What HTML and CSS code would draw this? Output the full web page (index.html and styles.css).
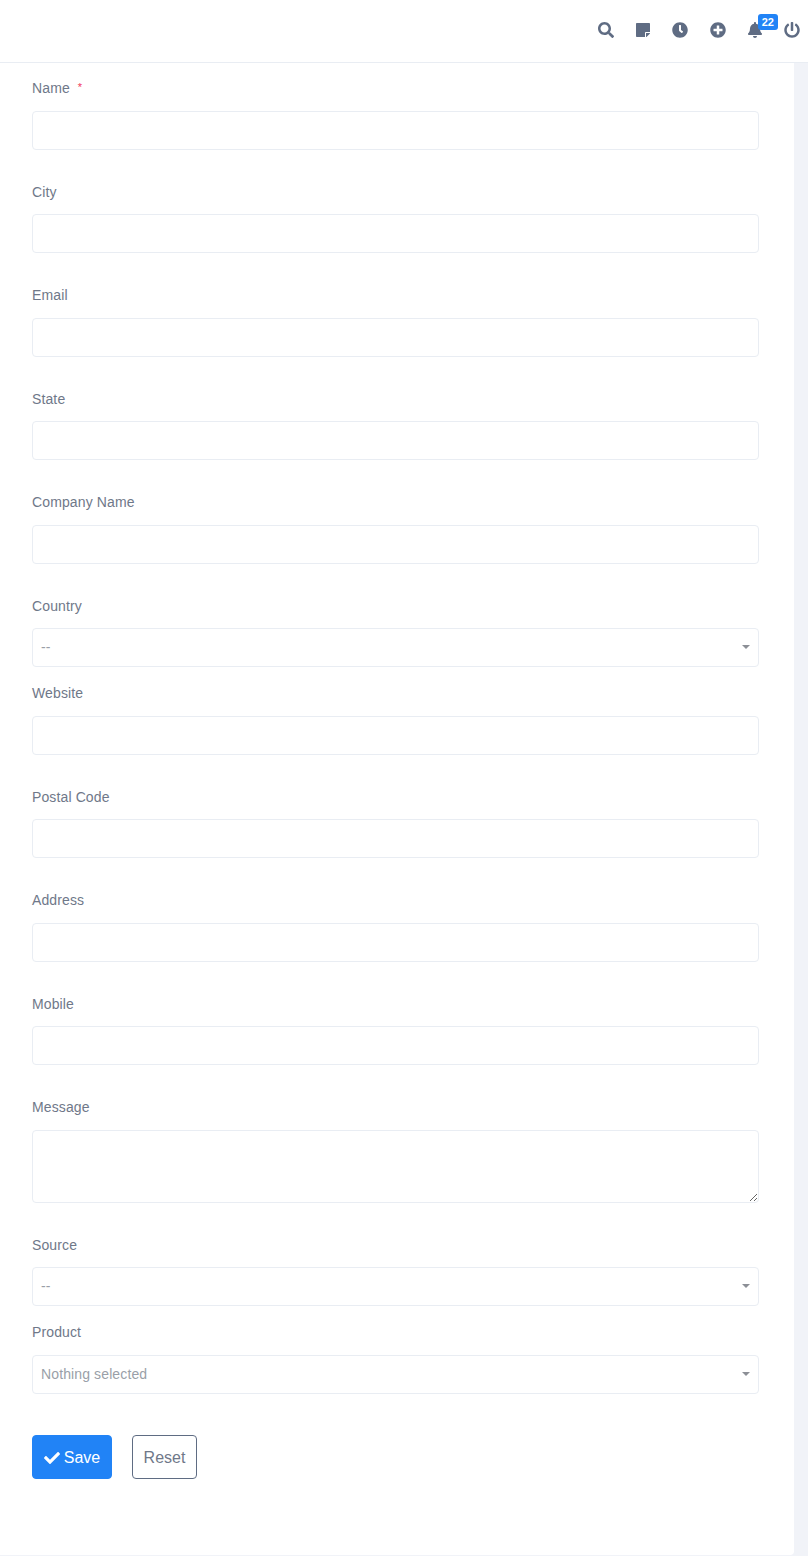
FILE: index.html
```html
<!DOCTYPE html>
<html lang="en">
<head>
<meta charset="utf-8">
<title>New Lead</title>
<link rel="stylesheet" href="styles.css">
</head>
<body>
<header class="topbar">
  <nav class="tools">
    <a class="tool"><svg class="icon" viewBox="0 0 512 512"><path d="M505 442.7L405.3 343c-4.5-4.5-10.6-7-17-7H372c27.6-35.3 44-79.7 44-128C416 93.1 322.9 0 208 0S0 93.1 0 208s93.1 208 208 208c48.3 0 92.7-16.4 128-44v16.3c0 6.4 2.5 12.5 7 17l99.7 99.7c9.4 9.4 24.6 9.4 33.9 0l28.3-28.3c9.4-9.4 9.4-24.6.1-34zM208 336c-70.7 0-128-57.2-128-128 0-70.7 57.2-128 128-128 70.7 0 128 57.2 128 128 0 70.7-57.2 128-128 128z"/></svg></a>
    <a class="tool"><svg class="icon" viewBox="0 0 448 512"><path d="M312 320h136V56c0-13.3-10.7-24-24-24H24C10.7 32 0 42.7 0 56v400c0 13.3 10.7 24 24 24h264V344c0-13.2 10.8-24 24-24zm129 55l-98 98c-4.5 4.5-10.6 7-17 7h-6V352h128v6.1c0 6.3-2.5 12.4-7 16.9z"/></svg></a>
    <a class="tool"><svg class="icon" viewBox="0 0 512 512"><path d="M256,8C119,8,8,119,8,256S119,504,256,504,504,393,504,256,393,8,256,8Zm92.49,313h0l-20,25a16,16,0,0,1-22.49,2.5h0l-67-49.72a40,40,0,0,1-15-31.23V112a16,16,0,0,1,16-16h32a16,16,0,0,1,16,16V256l58,42.5A16,16,0,0,1,348.49,321Z"/></svg></a>
    <a class="tool"><svg class="icon" viewBox="0 0 512 512"><path d="M256 8C119 8 8 119 8 256s111 248 248 248 248-111 248-248S393 8 256 8zm144 276c0 6.6-5.4 12-12 12h-92v92c0 6.6-5.4 12-12 12h-56c-6.6 0-12-5.4-12-12v-92h-92c-6.6 0-12-5.4-12-12v-56c0-6.6 5.4-12 12-12h92v-92c0-6.6 5.4-12 12-12h56c6.6 0 12 5.4 12 12v92h92c6.6 0 12 5.4 12 12v56z"/></svg></a>
    <a class="tool bell"><svg class="icon" viewBox="0 0 448 512"><path d="M224 512c35.32 0 63.97-28.65 63.97-64H160.03c0 35.35 28.65 64 63.97 64zm215.39-149.71c-19.32-20.76-55.47-51.99-55.47-154.29 0-77.7-54.48-139.9-127.94-155.16V32c0-17.67-14.32-32-31.98-32s-31.98 14.33-31.98 32v20.84C118.56 68.1 64.08 130.3 64.08 208c0 102.3-36.15 133.53-55.47 154.29-6 6.45-8.66 14.16-8.61 21.71.11 16.4 12.98 32 32.1 32h383.8c19.12 0 32-15.6 32.1-32 .05-7.55-2.61-15.27-8.61-21.71z"/></svg><span class="badge">22</span></a>
    <a class="tool"><svg class="icon" viewBox="0 0 512 512"><path d="M400 54.1c63 45 104 118.6 104 201.9 0 136.8-110.8 247.7-247.5 248C120 504.3 8.2 393 8 256.4 7.9 173.1 48.9 99.3 111.8 54.2c11.7-8.3 28-4.8 35 7.7L162.6 90c5.9 10.5 3.1 23.8-6.6 31-41.5 30.8-68 79.6-68 134.9-.1 92.3 74.5 168.1 168 168.1 91.6 0 168.6-74.2 168-169.1-.3-51.8-24.7-101.8-68.1-134-9.7-7.2-12.4-20.5-6.4-30.9l15.8-28.1c7-12.4 23.2-16.1 35-7.8zM296 264V24c0-13.3-10.7-24-24-24h-32c-13.3 0-24 10.7-24 24v240c0 13.3 10.7 24 24 24h32c13.3 0 24-10.7 24-24z"/></svg></a>
  </nav>
</header>
<main class="layout">
  <form class="card">
    <div class="field"><label class="label">Name <span class="req">*</span></label><input class="control" type="text"></div>
    <div class="field"><label class="label">City</label><input class="control" type="text"></div>
    <div class="field"><label class="label">Email</label><input class="control" type="text"></div>
    <div class="field"><label class="label">State</label><input class="control" type="text"></div>
    <div class="field"><label class="label">Company Name</label><input class="control" type="text"></div>
    <div class="field tight"><label class="label">Country</label><div class="control select">--<span class="caret"></span></div></div>
    <div class="field"><label class="label">Website</label><input class="control" type="text"></div>
    <div class="field"><label class="label">Postal Code</label><input class="control" type="text"></div>
    <div class="field"><label class="label">Address</label><input class="control" type="text"></div>
    <div class="field"><label class="label">Mobile</label><input class="control" type="text"></div>
    <div class="field"><label class="label">Message</label><textarea class="control area"></textarea></div>
    <div class="field tight"><label class="label">Source</label><div class="control select">--<span class="caret"></span></div></div>
    <div class="field tight"><label class="label">Product</label><div class="control select">Nothing selected<span class="caret"></span></div></div>
    <div class="actions">
      <button class="btn save" type="button"><svg class="check" viewBox="0 0 512 512"><path d="M173.898 439.404l-166.4-166.4c-9.997-9.997-9.997-26.206 0-36.204l36.203-36.204c9.997-9.998 26.207-9.998 36.204 0L192 312.69 432.095 72.596c9.997-9.997 26.207-9.997 36.204 0l36.203 36.204c9.997 9.997 9.997 26.206 0 36.204l-294.4 294.401c-9.998 9.997-26.207 9.997-36.204-.001z"/></svg>Save</button>
      <button class="btn reset" type="reset">Reset</button>
    </div>
  </form>
  <aside class="rail"></aside>
</main>
</body>
</html>
```

FILE: styles.css
```css
* { box-sizing: border-box; }
html, body { margin: 0; padding: 0; }
body {
  width: 808px;
  height: 1556px;
  overflow: hidden;
  background: #f1f3f8;
  font-family: "Liberation Sans", Arial, sans-serif;
  font-size: 14px;
  color: #6f7889;
  display: flex;
  flex-direction: column;
}
.topbar {
  height: 63px;
  flex: none;
  background: #fff;
  border-bottom: 1px solid #e9edf3;
  display: flex;
  justify-content: flex-end;
}
.tools {
  display: flex;
  align-items: center;
  padding-right: 8px;
  gap: 21.2px;
  height: 60px;
}
.tool {
  position: relative;
  width: 16px;
  height: 16px;
  display: block;
}
.icon { width: 16px; height: 16px; display: block; fill: #5f6c83; }
.badge {
  position: absolute;
  left: 11px;
  top: -8px;
  width: 20px;
  height: 16px;
  border-radius: 3px;
  background: #2183f6;
  color: #fff;
  font-size: 11px;
  font-weight: 700;
  line-height: 16px;
  text-align: center;
}
.layout { flex: 1; display: flex; min-height: 0; }
.card {
  width: 794px;
  height: 1492px;
  background: #fff;
  border-bottom-right-radius: 4px;
  padding: 15px 35px 0 32px;
}
.field { margin-bottom: 31.609375px; }
.field.tight { margin-bottom: 15.609375px; }
.label {
  display: block;
  height: 21px;
  line-height: 21px;
  margin-bottom: 11.890625px;
  letter-spacing: 0.12px;
}
.req {
  color: #f1385a;
  font-size: 11px;
  line-height: 1;
  vertical-align: 2px;
  margin-left: 4px;
}
.control {
  display: block;
  width: 727px;
  height: 39px;
  background: #fff;
  border: 1px solid #e9edf3;
  border-radius: 4px;
  outline: none;
  padding: 0 8px;
  font: inherit;
  color: inherit;
}
.area { height: 73px; resize: vertical; }
.select {
  position: relative;
  line-height: 37px;
  color: #9a9fa8;
  letter-spacing: 0.12px;
}
.caret {
  position: absolute;
  right: 8px;
  top: 16px;
  border-left: 4px solid transparent;
  border-right: 4px solid transparent;
  border-top: 4px solid #8c8f96;
}
.actions { display: flex; gap: 20px; padding-top: 25.5px; }
.btn {
  height: 44px;
  border-radius: 4px;
  font-family: inherit;
  font-size: 16px;
  padding: 2px 0 0;
  display: flex;
  align-items: center;
  justify-content: center;
}
.save { width: 80px; background: #2183f6; border: 1px solid #2183f6; color: #fff; gap: 4px; }
.check { width: 16px; height: 16px; fill: #fff; }
.reset { width: 65px; background: #fff; border: 1px solid #5f6c83; color: #6f7889; }
.rail { flex: 1; }
```
